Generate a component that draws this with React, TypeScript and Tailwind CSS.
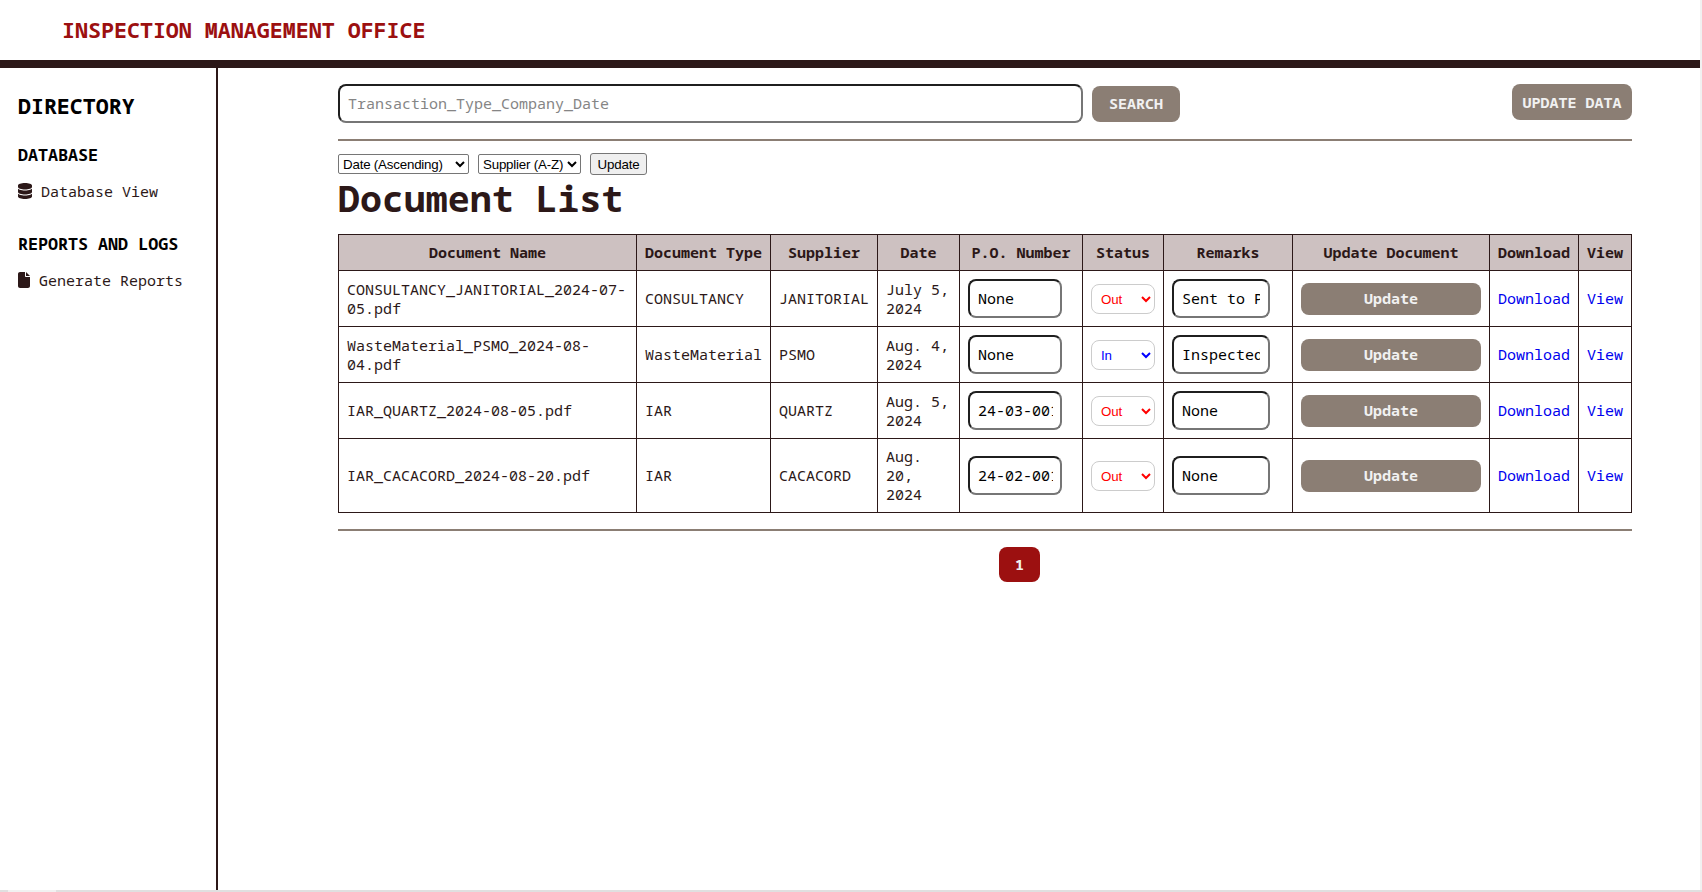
import React from "react";
import { FaDatabase, FaFile } from "react-icons/fa6";

type Status = "Out" | "In";

interface Doc {
  name: string;
  type: string;
  supplier: string;
  date: string;
  po: string;
  status: Status;
  remarks: string;
}

const docs: Doc[] = [
  { name: "CONSULTANCY_JANITORIAL_2024-07-05.pdf", type: "CONSULTANCY", supplier: "JANITORIAL", date: "July 5, 2024", po: "None", status: "Out", remarks: "Sent to PSMO" },
  { name: "WasteMaterial_PSMO_2024-08-04.pdf", type: "WasteMaterial", supplier: "PSMO", date: "Aug. 4, 2024", po: "None", status: "In", remarks: "Inspected" },
  { name: "IAR_QUARTZ_2024-08-05.pdf", type: "IAR", supplier: "QUARTZ", date: "Aug. 5, 2024", po: "24-03-001", status: "Out", remarks: "None" },
  { name: "IAR_CACACORD_2024-08-20.pdf", type: "IAR", supplier: "CACACORD", date: "Aug. 20, 2024", po: "24-02-001", status: "Out", remarks: "None" },
];

const headers = ["Document Name", "Document Type", "Supplier", "Date", "P.O. Number", "Status", "Remarks", "Update Document", "Download", "View"];

const field =
  "block h-[39px] rounded-lg border-2 border-t-[#1f1f1f] border-l-[#1f1f1f] border-r-[#767676] border-b-[#767676] bg-white pb-px pl-2 text-black outline-none placeholder:text-[#858585]";
const solidButton = "rounded-lg bg-[#8b7e74] font-bold text-[#f1f1f1]";
const cell = "border border-[#2c1818] px-2 py-0";
const nativeSelect =
  "h-5 rounded-[2px] border border-[#767676] bg-white font-['Liberation_Sans',Arial,sans-serif] text-[13.333px] tracking-[-0.2px] text-black";

function Sidebar() {
  return (
    <aside className="w-[218px] shrink-0 border-r-2 border-[#2c1818] pl-[18px]">
      <h2 className="mt-6 text-[21.6px] leading-[28px] font-bold text-black">DIRECTORY</h2>
      <h3 className="mt-6 text-[16.7px] leading-[22px] font-bold text-black">DATABASE</h3>
      <a className="mt-3.5 flex h-[22px] items-center gap-[9px]">
        <FaDatabase className="h-4 w-[14px]" />
        <span>Database View</span>
      </a>
      <h3 className="mt-[31px] text-[16.7px] leading-[22px] font-bold text-black">REPORTS AND LOGS</h3>
      <a className="mt-3.5 flex h-[22px] items-center gap-[9px]">
        <FaFile className="h-4 w-3" />
        <span>Generate Reports</span>
      </a>
    </aside>
  );
}

function DocumentTable() {
  return (
    <table className="mt-4 w-full table-fixed border-collapse">
      <colgroup>
        <col className="w-[298px]" />
        <col className="w-[134px]" />
        <col className="w-[107px]" />
        <col className="w-[82px]" />
        <col className="w-[123px]" />
        <col className="w-[81px]" />
        <col className="w-[129px]" />
        <col className="w-[197px]" />
        <col className="w-[89px]" />
        <col className="w-[53px]" />
      </colgroup>
      <thead>
        <tr className="h-9 bg-[#cdc1c1]">
          {headers.map((h) => (
            <th key={h} className="border border-[#2c1818] p-0 text-center font-bold whitespace-nowrap">
              {h}
            </th>
          ))}
        </tr>
      </thead>
      <tbody>
        {docs.map((d, i) => (
          <tr key={d.name} className={i === 3 ? "h-[74px]" : "h-14"}>
            <td className={cell}>{d.name}</td>
            <td className={cell}>{d.type}</td>
            <td className={cell}>{d.supplier}</td>
            <td className={cell}>{d.date}</td>
            <td className={cell}>
              <input className={`${field} w-[94px] pr-[7px]`} defaultValue={d.po} />
            </td>
            <td className={cell}>
              <select
                defaultValue={d.status}
                className={`block h-[30px] w-16 rounded-lg border border-[#cccccc] bg-white pt-px pr-1.5 pl-[5px] font-['Liberation_Sans',Arial,sans-serif] text-[13.333px] tracking-[-0.2px] ${
                  d.status === "Out" ? "text-[#ff0000]" : "text-[#0000ff]"
                }`}
              >
                <option>Out</option>
                <option>In</option>
              </select>
            </td>
            <td className={cell}>
              <input className={`${field} w-[98px] pr-2`} defaultValue={d.remarks} />
            </td>
            <td className={cell}>
              <button className={`${solidButton} block h-8 w-[180px]`}>Update</button>
            </td>
            <td className={cell}>
              <a className="text-[#0000ee]">Download</a>
            </td>
            <td className={cell}>
              <a className="text-[#0000ee]">View</a>
            </td>
          </tr>
        ))}
      </tbody>
    </table>
  );
}

export default function App() {
  return (
    <div className="flex h-[892px] w-[1702px] flex-col overflow-hidden bg-white font-['Noto_Sans_Mono','Liberation_Mono',monospace] text-[15px] leading-[19px] text-[#2c1818]">
      <div className="flex min-h-0 flex-1">
        <div className="flex w-[1700px] flex-col">
          <header className="flex h-[68px] shrink-0 items-center border-b-8 border-[#2c1818] pb-0.5 pl-[62px]">
            <h1 className="text-[21.65px] font-bold text-[#9c1010]">INSPECTION MANAGEMENT OFFICE</h1>
          </header>
          <div className="flex min-h-0 flex-1">
            <Sidebar />
            <main className="min-w-0 flex-1 pt-4 pr-[68px] pl-[120px]">
              <div className="flex h-[57px] items-start border-b-2 border-[#8b7e74]">
                <input className={`${field} w-[745px] pr-2`} placeholder="Transaction_Type_Company_Date" />
                <button className={`${solidButton} mt-0.5 ml-[9px] h-9 w-[88px] pb-0.5`}>SEARCH</button>
                <button className={`${solidButton} ml-auto h-9 w-[120px] whitespace-nowrap`}>UPDATE DATA</button>
              </div>
              <div className="mt-3 flex h-[22px] items-center gap-[9px]">
                <select className={`${nativeSelect} w-[131px]`}>
                  <option>Date (Ascending)</option>
                </select>
                <select className={`${nativeSelect} w-[103px]`}>
                  <option>Supplier (A-Z)</option>
                </select>
                <button className="h-[22px] w-[57px] rounded-[3px] border border-[#767676] bg-[#efefef] font-['Liberation_Sans',Arial,sans-serif] text-[13.333px] tracking-[-0.2px] text-black">
                  Update
                </button>
              </div>
              <h2 className="mt-[3px] h-10 text-[36.6px] leading-10 font-bold">Document List</h2>
              <DocumentTable />
              <div className="mt-4 border-t-2 border-[#8b7e74] pt-4 pl-[661px]">
                <a className="flex h-[35px] w-[41px] items-center justify-center rounded-lg bg-[#9c1010] font-bold text-[#f1f1f1]">1</a>
              </div>
            </main>
          </div>
        </div>
        <div className="w-0.5 bg-[#f1f1f1]" />
      </div>
      <div className="h-0.5 shrink-0 bg-[#e0e0e0] pl-2">
        <div className="h-0.5 w-12 bg-[#f1f1f1]" />
      </div>
    </div>
  );
}
